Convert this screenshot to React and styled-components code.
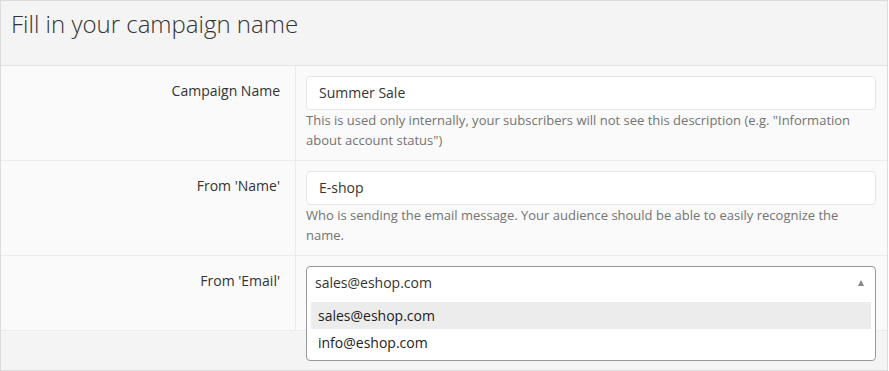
import React from "react";
import styled, { createGlobalStyle } from "styled-components";

const Global = createGlobalStyle`
  html, body { margin: 0; padding: 0; background: #fff; }
  body { font-family: "Open Sans", "Noto Sans", sans-serif; color: #333; }
  * { box-sizing: border-box; }
`;

const Panel = styled.div`
  width: 888px;
  height: 371px;
  border: 1px solid #dcdcdc;
  background: #f4f4f4;
  display: flex;
  flex-direction: column;
`;

const Header = styled.div`
  height: 65px;
  padding: 6px 10px 0;
  background: #f4f4f4;
  border-bottom: 1px solid #e3e3e3;
`;

const Title = styled.h1`
  margin: 0;
  font-size: 24px;
  font-weight: 300;
  line-height: 34px;
  color: #333;
`;

const Row = styled.div`
  display: grid;
  grid-template-columns: 295px 1fr;
  background: #fafafa;
  border-bottom: 1px solid #ececec;
`;

const Label = styled.div`
  border-right: 1px solid #ececec;
  text-align: right;
  padding: 15px 15px 0 0;
  font-size: 14px;
  line-height: 20px;
  color: #333;
`;

const Field = styled.div`
  padding: 10px 11px 10px 10px;
  position: relative;
  min-height: ${(p) => p.$minH || 0}px;
`;

const Input = styled.div`
  height: 34px;
  border: 1px solid #e6e6e6;
  border-radius: 4px;
  background: #fff;
  padding: 0 12px;
  font-size: 14px;
  line-height: 32px;
  color: #333;
`;

const Help = styled.div`
  font-size: 13px;
  line-height: 20px;
  color: #737373;
`;

const Select = styled.div`
  position: absolute;
  left: 10px;
  right: 11px;
  top: 10px;
  height: 95px;
  border: 1px solid #999;
  border-radius: 4px;
  background: #fff;
  z-index: 2;
`;

const SelectValue = styled.div`
  height: 31px;
  padding: 0 8px;
  display: flex;
  align-items: center;
  justify-content: space-between;
  font-size: 14px;
  color: #333;
`;

const Caret = styled.span`
  width: 0;
  height: 0;
  border-left: 3.5px solid transparent;
  border-right: 3.5px solid transparent;
  border-bottom: 6px solid #888;
  margin-right: 3px;
`;

const Options = styled.div`
  margin: 4px 4px 0 4px;
`;

const Option = styled.div`
  height: 27px;
  padding: 0 7px;
  font-size: 14px;
  line-height: 27px;
  color: #222;
  background: ${(p) => (p.$active ? "#ececec" : "transparent")};
`;

const Footer = styled.div`
  flex: 1;
  background: #f4f4f4;
`;

export default function App() {
  return (
    <>
      <Global />
      <Panel>
        <Header>
          <Title>Fill in your campaign name</Title>
        </Header>
        <Row>
          <Label>Campaign Name</Label>
          <Field>
            <Input>Summer Sale</Input>
            <Help>
              This is used only internally, your subscribers will not see this description (e.g. "Information about account status")
            </Help>
          </Field>
        </Row>
        <Row>
          <Label>From 'Name'</Label>
          <Field>
            <Input>E-shop</Input>
            <Help>
              Who is sending the email message. Your audience should be able to easily recognize the name.
            </Help>
          </Field>
        </Row>
        <Row>
          <Label>From 'Email'</Label>
          <Field $minH={74}>
            <Select>
              <SelectValue>
                <span>sales@eshop.com</span>
                <Caret />
              </SelectValue>
              <Options>
                <Option $active>sales@eshop.com</Option>
                <Option>info@eshop.com</Option>
              </Options>
            </Select>
          </Field>
        </Row>
        <Footer />
      </Panel>
    </>
  );
}
